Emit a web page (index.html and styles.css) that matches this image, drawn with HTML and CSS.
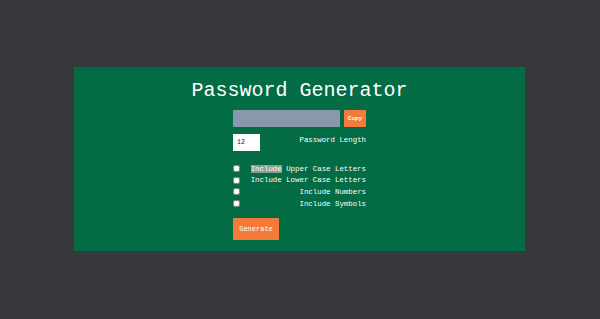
FILE: index.html
```html
<!DOCTYPE html>
<html lang="en">
<head>
    <meta charset="UTF-8">
    <title>Password Generator</title>
    <link rel="stylesheet" href="styles.css">
</head>
<body>
<div class="card">
    <h1 class="title">Password Generator</h1>
    <div class="form">
        <div class="row">
            <input type="text" class="result" readonly>
            <button class="btn copy">Copy</button>
        </div>
        <div class="row">
            <input type="number" class="length" value="12">
            <label class="label">Password Length</label>
        </div>
        <div class="checks">
            <div class="check">
                <input type="checkbox">
                <label class="label"><span class="sel">Include</span> Upper Case Letters</label>
            </div>
            <div class="check">
                <input type="checkbox">
                <label class="label">Include Lower Case Letters</label>
            </div>
            <div class="check">
                <input type="checkbox">
                <label class="label">Include Numbers</label>
            </div>
            <div class="check">
                <input type="checkbox">
                <label class="label">Include Symbols</label>
            </div>
        </div>
        <button class="btn generate">Generate</button>
    </div>
</div>
</body>
</html>
```

FILE: styles.css
```css
*{
    margin: 0;
    padding: 0;
    box-sizing: border-box;
}
body{
    background: #38373c;
    font-family: "Liberation Mono", "Courier New", monospace;
    color: #fff;
}
.card{
    width: 451px;
    height: 184px;
    margin: 67px 0 0 74px;
    background: #036c45;
    padding-top: 12px;
}
.title{
    font-size: 20px;
    font-weight: normal;
    text-align: center;
    line-height: 24px;
    height: 31px;
}
.form{
    width: 133px;
    margin: 0 auto;
}
.row{
    display: flex;
    justify-content: space-between;
    align-items: flex-start;
    margin-bottom: 7px;
}
.result{
    width: 107px;
    height: 17px;
    border: none;
    border-radius: 1px;
    background: #8898ad;
}
.btn{
    border: none;
    border-radius: 1px;
    background: #f47a3a;
    color: #fff;
    font-family: inherit;
    cursor: pointer;
}
.copy{
    width: 22px;
    height: 17px;
    font-size: 6px;
    font-weight: bold;
}
.length{
    width: 27px;
    height: 17px;
    border: none;
    background: #fff;
    font-family: inherit;
    font-size: 6.5px;
    padding-left: 4px;
    color: #222;
    -moz-appearance: textfield;
}
.length::-webkit-inner-spin-button{
    -webkit-appearance: none;
}
.label{
    font-size: 7.4px;
    line-height: 10px;
    text-align: right;
}
.row .label{
    margin-top: 1px;
}
.checks{
    margin-top: 12px;
}
.check{
    display: flex;
    justify-content: space-between;
    align-items: center;
    height: 11.6px;
}
.check input{
    width: 7px;
    height: 7px;
    margin: 0;
}
.sel{
    background: #8a9e92;
}
.generate{
    margin-top: 9px;
    width: 46px;
    height: 22px;
    font-size: 7px;
}
```
